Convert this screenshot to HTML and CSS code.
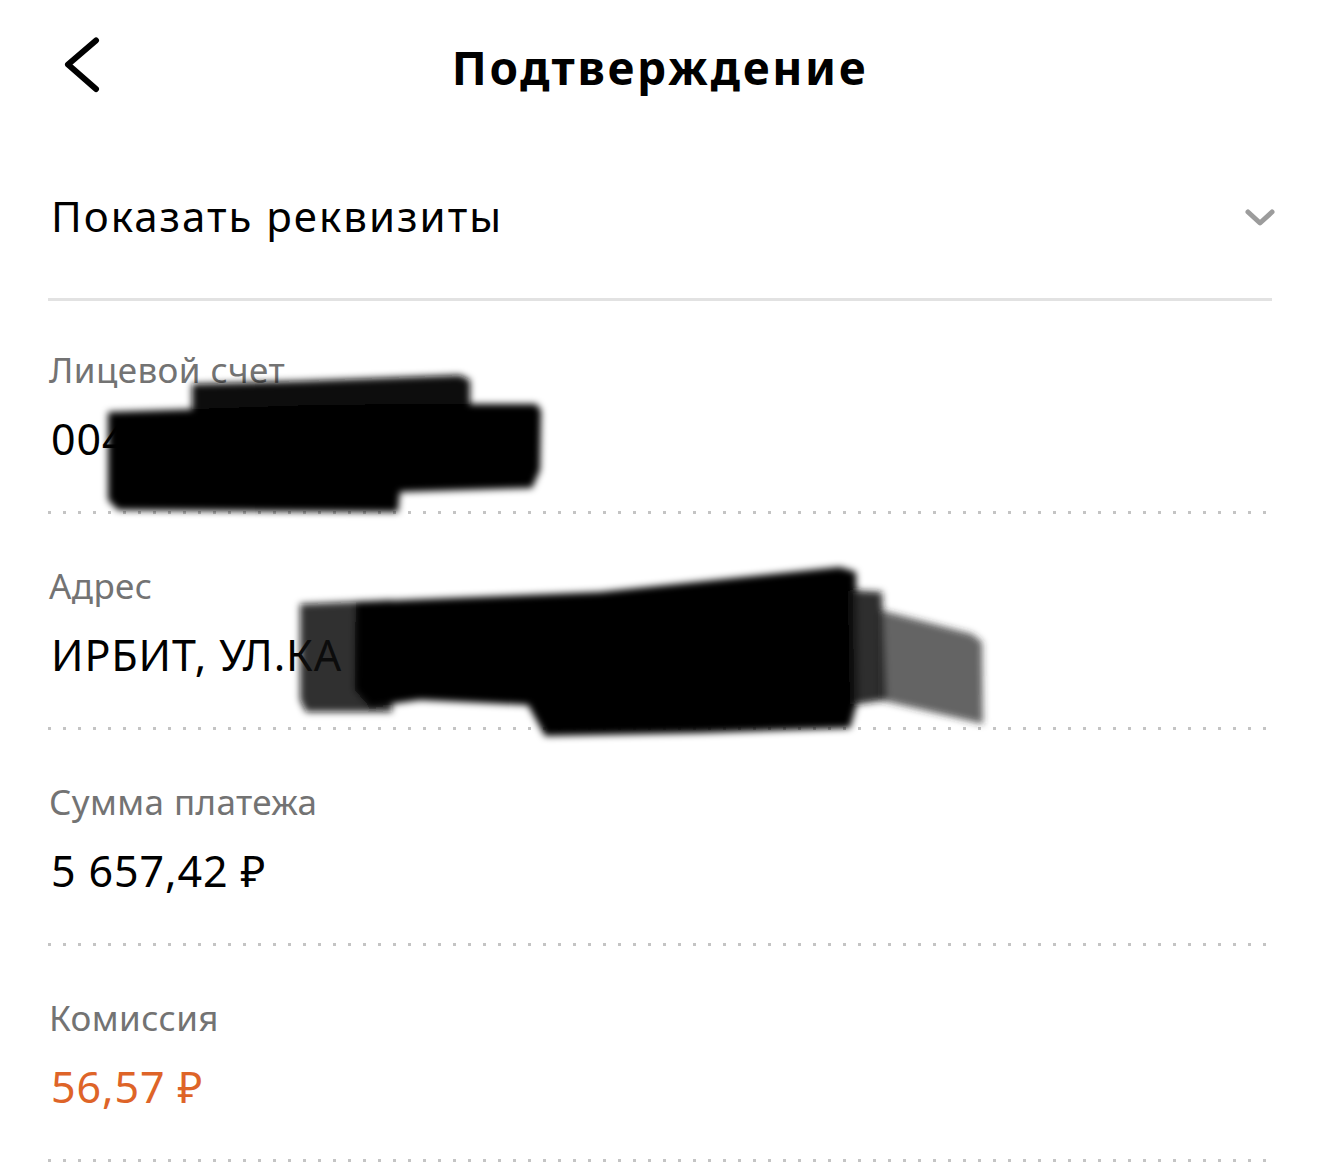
FILE: index.html
```html
<!DOCTYPE html>
<html lang="ru">
<head>
<meta charset="utf-8">
<title>Подтверждение</title>
<link rel="stylesheet" href="styles.css">
</head>
<body>
<div class="page">
  <header class="header">
    <div class="header-side">
      <svg class="back-icon" width="60" height="60" viewBox="0 0 60 60" aria-hidden="true">
        <path d="M48 3.5 L20 27.5 L48 52" fill="none" stroke="#000" stroke-width="6" stroke-linecap="round" stroke-linejoin="round"/>
      </svg>
    </div>
    <h1 class="title">Подтверждение</h1>
    <div class="header-side"></div>
  </header>

  <div class="toggle-row">
    <span class="toggle-text">Показать реквизиты</span>
    <svg class="chevron" width="30" height="20" viewBox="0 0 30 20" aria-hidden="true">
      <path d="M3 6 L15 17 L27 6" fill="none" stroke="#9c9c9c" stroke-width="5" stroke-linecap="round" stroke-linejoin="round"/>
    </svg>
  </div>
  <div class="solid-line"></div>

  <div class="field field-first">
    <div class="label">Лицевой счет</div>
    <div class="value">004</div>
  </div>
  <div class="dots"></div>

  <div class="field">
    <div class="label">Адрес</div>
    <div class="value">ИРБИТ, УЛ.КА</div>
  </div>
  <div class="dots"></div>

  <div class="field">
    <div class="label">Сумма платежа</div>
    <div class="value">5 657,42 ₽</div>
  </div>
  <div class="dots"></div>

  <div class="field">
    <div class="label">Комиссия</div>
    <div class="value value-accent">56,57 ₽</div>
  </div>
  <div class="dots"></div>
</div>

<svg class="redaction" width="1320" height="1176" viewBox="0 0 1320 1176" aria-hidden="true">
  <defs>
    <filter id="soft" x="-10%" y="-20%" width="120%" height="140%">
      <feGaussianBlur stdDeviation="3.5"/>
    </filter>
  </defs>
  <g filter="url(#soft)">
    <path d="M192 384 L300 381 L460 375 L470 380 L470 412 L192 412 Z" fill="#0a0a0a"/>
    <path d="M108 412 L200 409 L320 405 L470 404 L536 404 L541 410 L540 470 L532 488 L400 492 L398 512 L118 510 L108 500 Z" fill="#000"/>
    <path d="M300 604 L392 600 L392 712 L306 712 L300 700 Z" fill="rgba(10,10,10,0.86)"/>
    <path d="M356 602 L600 592 L840 567 L856 572 L858 700 L850 728 L700 733 L545 736 L528 705 L420 700 L370 707 L355 690 Z" fill="#000"/>
    <path d="M850 590 L882 592 L886 700 L852 705 Z" fill="rgba(20,20,20,0.9)"/>
    <path d="M880 610 L972 634 L982 642 L983 724 L880 700 Z" fill="rgba(40,40,40,0.72)"/>
  </g>
</svg>
</body>
</html>
```

FILE: styles.css
```css
* {
  box-sizing: border-box;
}

html,
body {
  margin: 0;
  padding: 0;
  background: #ffffff;
}

body {
  position: relative;
  width: 1320px;
  min-height: 1176px;
  font-family: "Noto Sans", "Open Sans", "DejaVu Sans", sans-serif;
  color: #000;
  overflow: hidden;
}

.page {
  padding: 0 48px;
}

.header {
  height: 134px;
  display: grid;
  grid-template-columns: 1fr auto 1fr;
  align-items: center;
}

.header-side {
  display: flex;
  align-items: center;
}

.back-icon {
  display: block;
}

.title {
  margin: 0;
  font-size: 46px;
  line-height: 60px;
  font-weight: 700;
  letter-spacing: 2.7px;
}

.toggle-row {
  height: 164px;
  display: flex;
  align-items: center;
  justify-content: space-between;
}

.toggle-text {
  margin-left: 3px;
  font-size: 42px;
  line-height: 56px;
  letter-spacing: 2px;
}

.chevron {
  display: block;
  margin-right: -3px;
}

.solid-line {
  height: 3px;
  background: #e2e2e2;
}

.field {
  padding: 48px 0 44px;
  display: flex;
  flex-direction: column;
  gap: 17px;
}

.field-first {
  padding-top: 45px;
}

.label {
  margin-left: 1px;
  font-size: 35px;
  line-height: 48px;
  letter-spacing: 0.4px;
  color: #737373;
}

.value {
  margin-left: 3px;
  font-size: 43px;
  line-height: 56px;
  letter-spacing: 0.9px;
  color: #000;
}

.value-accent {
  color: #de6428;
}

.dots {
  height: 3px;
  background-image: linear-gradient(to right, #c4c4c4 0, #c4c4c4 3px, transparent 3px);
  background-size: 15px 3px;
  background-repeat: repeat-x;
  margin-right: -4px;
}

.redaction {
  position: absolute;
  top: 0;
  left: 0;
  pointer-events: none;
}
```
